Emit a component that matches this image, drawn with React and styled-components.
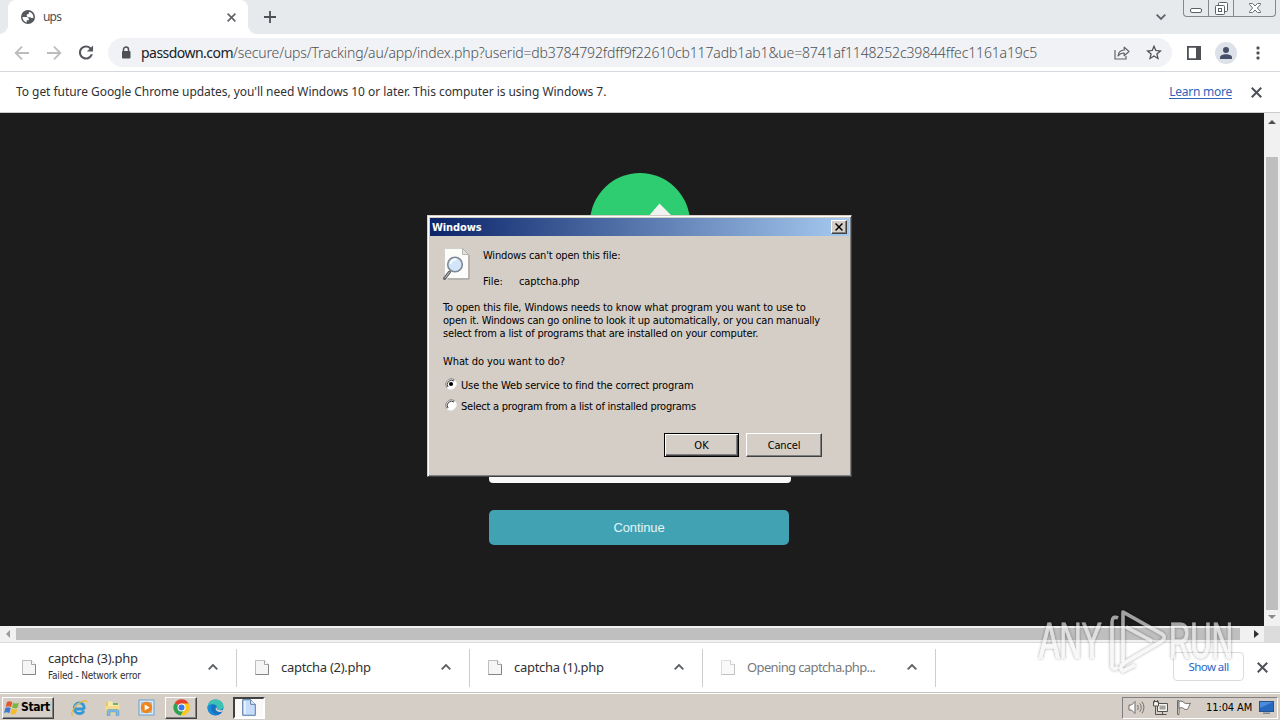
import React, { useState } from 'react';
import styled, { createGlobalStyle, css } from 'styled-components';

const GlobalStyle = createGlobalStyle`
  * {
    box-sizing: border-box;
  }

  body {
    margin: 0;
    overflow: hidden;
    font-family: 'DejaVu Sans Condensed', 'DejaVu Sans', sans-serif;
    font-size: 11px;
    color: #000;
  }

  button {
    font-family: inherit;
    padding: 0;
    margin: 0;
  }

  svg {
    display: block;
    flex: none;
  }
`;

const Screen = styled.div`
  position: relative;
  width: 1280px;
  height: 720px;
  overflow: hidden;
  display: flex;
  flex-direction: column;
  background: #fff;
`;

const Line = styled.span`
  display: block;
  flex: none;
  white-space: pre;
  font-size: ${(p) => p.$size || 11}px;
  line-height: ${(p) => p.$lh || 13}px;
  letter-spacing: ${(p) => p.$ls || 0}px;
  color: ${(p) => p.$color || '#000'};
`;

const UiLine = styled(Line)`
  font-family: 'Noto Sans', sans-serif;
  font-weight: ${(p) => p.$weight || 400};
`;

/* ---------- tab strip ---------- */

const TabStrip = styled.div`
  flex: none;
  display: flex;
  height: 34px;
  background: #e6eaed;
  padding-left: 8px;
`;

const Tab = styled.div`
  position: relative;
  display: flex;
  align-items: center;
  width: 240px;
  height: 34px;
  padding: 0 12px 0 13px;
  background: #fff;
  border-radius: 8px 8px 0 0;

  &::before,
  &::after {
    content: '';
    position: absolute;
    bottom: 0;
    width: 8px;
    height: 8px;
  }

  &::before {
    left: -8px;
    background: radial-gradient(circle at 0 0, transparent 7.5px, #fff 8px);
  }

  &::after {
    right: -8px;
    background: radial-gradient(circle at 100% 0, transparent 7.5px, #fff 8px);
  }
`;

const TabTitle = styled(UiLine)`
  flex: 1;
  margin-left: 8px;
`;

const NewTab = styled.div`
  margin: 10px 0 0 15px;
`;

const TabSearch = styled.div`
  margin: 12px 16px 0 auto;
`;

const WindowButtons = styled.div`
  display: flex;
  width: 93px;
  height: 17px;
  margin-right: 4px;
  border: 1px solid #83888c;
  border-top: 0;
  border-radius: 0 0 4px 4px;
`;

const WindowButton = styled.div`
  width: ${(p) => p.$w}px;
  display: flex;
  justify-content: center;
  padding-top: ${(p) => p.$top || 0}px;

  & + & {
    border-left: 1px solid #83888c;
  }
`;

/* ---------- toolbar ---------- */

const Toolbar = styled.div`
  flex: none;
  display: flex;
  align-items: center;
  height: 38px;
  border-bottom: 1px solid #d5d8dc;
  padding: 0 20px 0 14px;
`;

const NavIcons = styled.div`
  display: flex;
  gap: 16px;
  margin-right: 14px;
`;

const Omnibox = styled.div`
  display: flex;
  align-items: center;
  width: 1064px;
  height: 29px;
  border-radius: 15px;
  background: #f1f2f5;
  padding: 0 10px 0 12px;
`;

const Url = styled.div`
  display: flex;
  flex: 1;
  margin-left: 9px;
`;

const OmniIcons = styled.div`
  display: flex;
  gap: 16px;
`;

const ToolbarIcons = styled.div`
  display: flex;
  align-items: center;
  gap: 14px;
  margin-left: auto;
`;

const Menu = styled.div`
  margin-left: 5px;
`;

/* ---------- info bar ---------- */

const InfoBar = styled.div`
  flex: none;
  display: flex;
  align-items: center;
  height: 41px;
  border-bottom: 1px solid #c9cbcd;
  padding: 0 18px 0 16px;
`;

const LearnMore = styled(UiLine)`
  margin-left: auto;
  margin-right: 19px;
  border-bottom: 1px solid #2f64b8;
`;

/* ---------- page ---------- */

const Viewport = styled.div`
  flex: none;
  display: flex;
  height: 513px;
`;

const Page = styled.div`
  width: 1264px;
  background: #1c1c1c;
  display: flex;
  flex-direction: column;
  align-items: center;
  padding-top: 60px;
`;

const Badge = styled.div`
  width: 100px;
  height: 100px;
  margin-left: 16px;
`;

const PageForm = styled.div`
  width: 302px;
  margin: 173px 0 0 16px;
`;

const Field = styled.div`
  height: 37px;
  border-radius: 4px;
  background: #f8f8f8;
`;

const Continue = styled.button`
  display: block;
  width: 300px;
  height: 35px;
  margin-top: 27px;
  border: 0;
  border-radius: 5px;
  background: #41a2b3;
  color: #e4f5f7;
  font-family: 'Liberation Sans', Arial, sans-serif;
  font-size: 13px;
  letter-spacing: -0.1px;
`;

const VScroll = styled.div`
  width: 16px;
  background: #f1f1f1;
  display: flex;
  flex-direction: column;
  align-items: center;
  padding-top: 7px;
`;

const VThumb = styled.div`
  width: 12px;
  height: 453px;
  margin: 33px 0 5px;
  background: #bfbfbf;
`;

const HScroll = styled.div`
  flex: none;
  display: flex;
  align-items: center;
  height: 17px;
  background: #f1f1f1;
  border-bottom: 1px solid #dadada;
  padding-left: 6px;
`;

const HThumb = styled.div`
  width: 1224px;
  height: 12px;
  margin: 0 14px 0 5px;
  background: #bfbfbf;
`;

const Corner = styled.div`
  width: 16px;
  height: 16px;
  margin-left: auto;
  background: #dcdcdc;
`;

/* ---------- download shelf ---------- */

const Shelf = styled.div`
  flex: none;
  display: flex;
  align-items: center;
  height: 49px;
  background: #fff;
`;

const Download = styled.div`
  display: flex;
  align-items: center;
  width: ${(p) => p.$w}px;
  height: 38px;
  padding: 0 18px 0 ${(p) => p.$pad}px;
  border-right: 1px solid #cbcdd0;
`;

const DownloadText = styled.div`
  flex: 1;
  margin-left: 12px;
  padding-bottom: 1px;
`;

const ShowAll = styled.button`
  width: 71px;
  height: 29px;
  margin: 0 13px 2px auto;
  display: flex;
  align-items: center;
  justify-content: center;
  background: transparent;
  border: 1px solid #dadce0;
  border-radius: 4px;
`;

const ShelfClose = styled.div`
  margin: 0 12px 1px 0;
`;

/* ---------- taskbar ---------- */

const Taskbar = styled.div`
  flex: none;
  display: flex;
  align-items: center;
  height: 28px;
  border-top: 1px solid #c4c3bd;
  box-shadow: inset 0 1px 0 #fff;
  background: #d5cec6;
  padding: 2px 2px 0 2px;
`;

const raised = css`
  border: 1px solid;
  border-color: #fff #404040 #404040 #fff;
  box-shadow: inset -1px -1px 0 #808080;
`;

const StartButton = styled.button`
  ${raised}
  width: 52px;
  height: 22px;
  background: #d5cec6;
  display: flex;
  align-items: center;
  padding-left: 1px;
`;

const StartText = styled(Line)`
  font-weight: bold;
`;

const QuickLaunch = styled.div`
  display: flex;
  align-items: center;
  gap: 16px;
  margin: 0 10px 0 16px;
`;

const TaskButton = styled.div`
  width: 32px;
  height: 22px;
  margin-right: 2px;
  display: flex;
  align-items: center;
  justify-content: center;
  ${(p) =>
    p.$pressed
      ? css`
          background: #fbfaf8;
          border: 2px solid;
          border-color: #404040 #fff #fff #404040;
        `
      : p.$flat
      ? ''
      : raised}
`;

const Tray = styled.div`
  display: flex;
  align-items: center;
  width: 156px;
  height: 22px;
  margin-left: auto;
  border: 1px solid;
  border-color: #808080 #fff #fff #808080;
  padding-left: 5px;
`;

const TrayIcons = styled.div`
  display: flex;
  align-items: center;
  gap: 7px;
`;

const Clock = styled(Line)`
  margin: 0 7px 0 14px;
`;

/* ---------- dialog ---------- */

const Dialog = styled.div`
  position: absolute;
  left: 427px;
  top: 215px;
  width: 425px;
  height: 262px;
  background: #d5cec6;
  border: 1px solid;
  border-color: #d5cec6 #404040 #404040 #d5cec6;
  box-shadow: inset 1px 1px 0 #fff, inset -1px -1px 0 #808080;
  padding: 2px;
`;

const TitleBar = styled.div`
  display: flex;
  align-items: center;
  justify-content: space-between;
  height: 18px;
  background: linear-gradient(90deg, #0b246a, #a5caf0);
  padding: 0 2px;
`;

const TitleText = styled(Line)`
  font-weight: bold;
`;

const CloseButton = styled.button`
  ${raised}
  width: 16px;
  height: 14px;
  background: #d5cec6;
  display: flex;
  align-items: center;
  justify-content: center;
`;

const DialogBody = styled.div`
  padding: 11px 27px 0 13px;
`;

const FileInfo = styled.div`
  display: flex;
  gap: 12px;
  height: 54px;
`;

const FileText = styled.div`
  padding-top: 2px;
`;

const FileRow = styled.div`
  display: flex;
  margin-top: 13px;
`;

const FileLabel = styled.div`
  width: 36px;
`;

const Question = styled.div`
  margin-top: 15px;
`;

const Radio = styled.div`
  display: flex;
  align-items: flex-start;
  gap: 4px;
  height: 14px;
  margin: ${(p) => p.$mt}px 0 0 1px;

  & > span {
    padding-top: 1px;
  }
`;

const Actions = styled.div`
  display: flex;
  justify-content: flex-end;
  gap: 7px;
  margin-top: 20px;
`;

const ActionButton = styled.button`
  ${raised}
  width: ${(p) => (p.$primary ? 75 : 76)}px;
  height: 24px;
  background: #d5cec6;
  display: flex;
  align-items: center;
  justify-content: center;

  ${(p) =>
    p.$primary &&
    css`
      border-color: #000;
      box-shadow: inset 1px 1px 0 #fff, inset -1px -1px 0 #404040, inset -2px -2px 0 #808080;
    `}
`;

const Watermark = styled.div`
  position: absolute;
  left: 1036px;
  top: 604px;
  pointer-events: none;
`;

/* ---------- icons ---------- */

const Cross = ({ size = 9, w = 1.8, color = '#5f6368' }) => (
  <svg width={size} height={size} viewBox="0 0 10 10" stroke={color} strokeWidth={w}>
    <path d="M.7.7l8.6 8.6M9.3.7L.7 9.3" />
  </svg>
);

const Globe = () => (
  <svg width="14" height="14" viewBox="0 0 14 14">
    <circle cx="7" cy="7" r="7" fill="#55595e" />
    <path d="M1.500 7h3.700c2.200.1 3 1.200 2.600 3.300H5.700v2.200C3.300 12 1.500 9.700 1.500 7z" fill="#fff" />
    <path d="M12.500 7.500c-.9.900-2.300.8-3-.300H7C5.800 6.500 5.400 5.600 5.800 4.700c.4-.7 1-.9 1.900-.8-.1-1 .2-1.700 1-2 2.200.700 3.800 2.800 3.800 5.600z" fill="#fff" />
  </svg>
);

const Arrow = ({ flip }) => (
  <svg width="16" height="16" viewBox="0 0 16 16" fill="none" stroke="#babcbe" strokeWidth="1.8">
    <path d={flip ? 'M1 8h13M8 1.700L14.300 8 8 14.300' : 'M15 8H2M8 1.700L1.700 8 8 14.300'} />
  </svg>
);

const Reload = () => (
  <svg width="16" height="15" viewBox="3.500 3.500 17 17" fill="#55595e">
    <path d="M17.650 6.350C16.200 4.900 14.210 4 12 4c-4.420 0-7.990 3.580-7.990 8s3.570 8 7.990 8c3.730 0 6.840-2.550 7.730-6h-2.500c-.820 2.100-2.800 3.600-5.230 3.600-3.100 0-5.600-2.500-5.600-5.600s2.500-5.600 5.600-5.600c1.500 0 2.900.600 3.900 1.600L13 11h7V4l-2.350 2.350z" />
  </svg>
);

const Lock = () => (
  <svg width="12" height="14" viewBox="0 0 12 14">
    <path d="M3.500 6V3.600a2.500 2.500 0 015 0V6" fill="none" stroke="#4d5156" strokeWidth="1.500" />
    <rect x="2" y="5" width="8.500" height="7.500" rx="1" fill="#4d5156" />
  </svg>
);

const Share = () => (
  <svg width="16" height="16" viewBox="0 0 16 16" fill="none" stroke="#5f6368" strokeWidth="1.200">
    <path d="M1 5v9h11v-3" />
    <path d="M4 11c.400-3.800 2.500-5.800 6.200-6V2.200L15 6.500l-4.800 4.200V8C7.400 8 5.400 9 4 11z" strokeLinejoin="round" />
  </svg>
);

const Star = () => (
  <svg width="16" height="16" viewBox="2 2.500 20 20" fill="#4d5156">
    <path d="M22 9.240l-7.190-.620L12 2 9.190 8.630 2 9.240l5.460 4.730L5.820 21 12 17.270 18.180 21l-1.630-7.030L22 9.240zM12 15.400l-3.760 2.270 1-4.280-3.320-2.880 4.380-.380L12 6.100l1.710 4.040 4.380.380-3.320 2.880 1 4.280L12 15.400z" />
  </svg>
);

const Panel = () => (
  <svg width="14" height="14" viewBox="0 0 14 14">
    <path d="M0 0h14v14H0zM1.800 1.800v10.400H9V1.800z" fillRule="evenodd" fill="#4d5156" />
  </svg>
);

const Avatar = () => (
  <svg width="22" height="22" viewBox="0 0 22 22">
    <circle cx="11" cy="11" r="11" fill="#dde1e8" />
    <circle cx="11" cy="8" r="3" fill="#475069" />
    <path d="M5 17v-1.500c0-2.300 3-3.300 6-3.300s6 1 6 3.300V17z" fill="#475069" />
  </svg>
);

const Dots = () => (
  <svg width="4" height="14" viewBox="0 0 4 14" fill="#4d5156">
    <rect x=".5" y="0.500" width="3" height="3" rx="1" />
    <rect x=".5" y="5.500" width="3" height="3" rx="1" />
    <rect x=".5" y="10.500" width="3" height="3" rx="1" />
  </svg>
);

const Chevron = () => (
  <svg width="10" height="8" viewBox="0 0 10 8" fill="none" stroke="#5f6368" strokeWidth="1.900">
    <path d="M.7 5.300L5 1l4.300 4.300" />
  </svg>
);

const Triangle = ({ d, color = '#4f4f4f', w = 8, h = 4 }) => (
  <svg width={w} height={h} viewBox={`0 0 ${w} ${h}`} fill={color}>
    <path d={d} />
  </svg>
);

const FileIcon = ({ faded }) => (
  <svg width="14" height="17" viewBox="0 0 14 17" opacity={faded ? 0.5 : 1}>
    <path d="M.5 1.500h9l4 4v10H.5z" fill="#f5f5f5" stroke="#bdbdbd" />
    <path d="M9.500 1.500v4h4" fill="#fff" stroke="#a5a5a5" />
    <path d="M.5 15.500h13V5.500" fill="none" stroke="#858585" />
  </svg>
);

const SearchDoc = () => (
  <svg width="28" height="34" viewBox="0 0 28 34">
    <path d="M1.500 1.500h18l6 6v24h-24z" fill="#fcfcfa" stroke="#d2d0ca" />
    <path d="M19.500 1.500l6 6h-6z" fill="#e3e1dc" stroke="#a9a7a2" strokeWidth=".8" />
    <path d="M26 8v24H5" fill="none" stroke="#8d8b87" strokeWidth=".8" />
    <path d="M6.500 25l-5 6.500" stroke="#66696d" strokeWidth="3" strokeLinecap="round" />
    <path d="M6.500 25l-4.500 6" stroke="#b5bac0" strokeWidth="1" />
    <circle cx="12" cy="17.500" r="7.300" fill="#d3e5fa" stroke="#7e8995" strokeWidth="1.600" />
    <path d="M7.500 17c.500-3 3-5 6-4.500" stroke="#fff" strokeWidth="1.800" fill="none" />
  </svg>
);

const RadioMark = ({ checked }) => (
  <svg width="13" height="13" viewBox="0 0 13 13">
    <circle cx="7" cy="6" r="5" fill="#fff" />
    <path d="M3.200 9.800A5.400 5.400 0 0110.800 2.200" fill="none" stroke="#808080" />
    <path d="M4 9A4.300 4.300 0 0110 3" fill="none" stroke="#404040" />
    <path d="M10.800 2.200A5.400 5.400 0 013.200 9.800" fill="none" stroke="#fff" />
    {checked && <circle cx="7" cy="6" r="2.100" fill="#000" />}
  </svg>
);

const WinFlag = () => (
  <svg width="17" height="16" viewBox="0 0 16 15">
    <path d="M2.800 1.800c1.800-1 3.500-.8 5 .2L6.600 6.700c-1.600-1-3.200-1.100-5-.2z" fill="#e2572b" />
    <path d="M8.700 2.500c1.600.9 3.300.9 5.300 0l-1.300 4.700c-1.900.9-3.600.8-5.100-.1z" fill="#7db53a" />
    <path d="M1.300 7.500c1.800-.9 3.400-.8 5 .2L5 12.400c-1.500-1-3.200-1.100-5-.2z" fill="#3f78cf" />
    <path d="M7.300 8.200c1.600.9 3.300.9 5.200 0l-1.300 4.700c-2 .9-3.700.8-5.200-.1z" fill="#f5bd2b" />
  </svg>
);

const IeIcon = () => (
  <svg width="18" height="18" viewBox="0 0 18 18" fill="none">
    <path d="M14.500 10H4.800M14.200 9.800c.2-3.700-1.800-6-4.900-6-3 0-5 2.300-5 5.400s2.100 5.300 5.100 5.300c2.200 0 3.700-.9 4.400-2.500" stroke="#3398d6" strokeWidth="2.800" />
    <path d="M4.500 8c.7-2.400 2.500-3.700 5-3.700" stroke="#8dd0f2" />
    <path d="M3 16.300C-.5 16 3.500 8 9.500 4c4-2.700 7.500-3.300 7-.5" stroke="#e6b93f" strokeWidth="1.300" />
  </svg>
);

const FolderIcon = () => (
  <svg width="18" height="18" viewBox="0 0 18 18">
    <path d="M2 3h5l1 2h7v9H2z" fill="#e9c765" />
    <path d="M4 2.500h4l1 2h6v4H4z" fill="#f7e9a8" />
    <path d="M9 4h5v2H9z" fill="#69b37a" />
    <path d="M1.500 7h14v7.500h-14z" fill="#f3dd8c" />
    <path d="M3 16.500v-4.200c0-1.300.8-1.800 2-1.800h8c1.200 0 2 .5 2 1.800v4.200h-3V13H6v3.500z" fill="#7fb9e2" stroke="#5a95c4" strokeWidth=".5" />
  </svg>
);

const MediaIcon = () => (
  <svg width="17" height="17" viewBox="0 0 17 17">
    <rect x="1" y="1" width="15" height="15" fill="#d8e8f6" stroke="#6aa0d0" />
    <rect x="3" y="3" width="11" height="11" fill="#9dc3e6" />
    <circle cx="8.500" cy="8.500" r="5.700" fill="#f0851d" />
    <path d="M6.700 5.500v6l5-3z" fill="#fff" />
  </svg>
);

const ChromeIcon = () => (
  <svg width="17" height="17" viewBox="0 0 17 17">
    <path d="M8.500 8.500L1.600 4.200a8 8 0 0114 .2z" fill="#e2412f" />
    <path d="M8.500 8.500L1.600 4.200a8 8 0 006.100 12.200l3.700-6z" fill="#2fa04f" />
    <path d="M8.500 8.500l3 1.600-3.800 6.300a8 8 0 007.900-12H8.500z" fill="#fbc616" />
    <circle cx="8.500" cy="8.400" r="4" fill="#fff" />
    <circle cx="8.500" cy="8.400" r="3" fill="#3b78e7" />
  </svg>
);

const EdgeIcon = () => (
  <svg width="17" height="17" viewBox="0 0 17 17">
    <circle cx="8.500" cy="8.500" r="8" fill="#1673c4" />
    <path d="M.5 8C1 3 4.500.5 8.500.5c4.500 0 8 3 8 6.500 0 2.500-2 4-4.300 4-1.500 0-2.700-.6-2.200-1.600C10.600 7.500 9 5.500 6.500 5.300 3.500 5.200 1.200 6.500.5 8z" fill="#3cc3b5" />
    <path d="M.5 8c.7-2 3-3.200 5.500-2.700C4 6.500 3.500 9 4.500 11.500s3.500 4.300 6.500 4.300C5.500 17.500 0 13.500.5 8z" fill="#1b8bd6" />
    <path d="M9.300 8c-1.500 2 0 4.700 3 5 1.400.1 2.800-.2 4.700-1.200V10.500c-2 1-6 .9-7-.5z" fill="#d5cec6" />
  </svg>
);

const DocIcon = () => (
  <svg width="14" height="17" viewBox="0 0 14 17">
    <path d="M.7.7h8l4.600 4.600v11H.7z" fill="#c6dcf7" stroke="#5678a8" />
    <path d="M8.700.7v4.600h4.600" fill="#eef5fd" stroke="#5678a8" />
    <path d="M2 2h2v13H2z" fill="#e4effc" />
  </svg>
);

const Speaker = () => (
  <svg width="17" height="15" viewBox="0 0 17 15" fill="#fff" stroke="#6d6b68">
    <path d="M1 5h2.500L7 1.500v12L3.500 10H1z" />
    <path d="M9.500 5c1 1.500 1 3.500 0 5M11.700 3.300c2 2.500 2 6 0 8.500M14 1.700c2.500 3.500 2.500 8 0 11.500" fill="none" />
  </svg>
);

const Network = () => (
  <svg width="17" height="16" viewBox="0 0 17 16" stroke="#55534f" fill="#f3f1ee">
    <path d="M5.500 3.500h10v8h-10z" />
    <path d="M7.500 5.500h6v4h-6z" fill="#a6a39e" stroke="none" />
    <path d="M7.500 14.500h7M10.500 12v2" />
    <path d="M1.500 1.500h5V6h-5z" />
    <path d="M3.500 6v8.500H8" fill="none" />
    <path d="M2.500 0v2.500M5.500 0v2.500" />
  </svg>
);

const Flag = () => (
  <svg width="16" height="15" viewBox="0 0 16 15" fill="#fff" stroke="#6d6b68">
    <path d="M1.500.5h1.500v14H1.500z" />
    <path d="M3 1.500c2.500-1 4 0 5 1.200 1.500 1.200 4 1.100 6.500.5-1 1-1.500 4-3 6-2 .6-3 .2-4-.8-1.500-1-3-1-4.500 0z" />
  </svg>
);

const Monitor = () => (
  <svg width="15" height="13" viewBox="0 0 15 13">
    <rect x="0" y="0" width="15" height="11" fill="#27518f" />
    <rect x="1" y="1" width="13" height="9" fill="#2568bd" />
    <path d="M1 1h13L1 7z" fill="#4a8cda" />
    <rect x="4" y="11.500" width="7" height="1.500" fill="#7e8894" />
  </svg>
);

const AnyRunMark = () => (
  <svg width="204" height="76" viewBox="0 0 204 76">
    <defs>
      <filter id="soft" x="-10%" y="-10%" width="120%" height="120%">
        <feDropShadow dx="0" dy="0" stdDeviation="1.8" floodColor="#000" floodOpacity=".65" />
      </filter>
    </defs>
    <g filter="url(#soft)" opacity=".62" fill="#f4f4f4" stroke="#f4f4f4">
      <g fontFamily="'Liberation Sans', sans-serif" fontSize="50" strokeWidth=".9">
        <text x="3" y="54" textLength="63" lengthAdjust="spacingAndGlyphs">ANY</text>
        <text x="133" y="54" textLength="64" lengthAdjust="spacingAndGlyphs">RUN</text>
      </g>
      <path
        d="M82 14c-4-2-6 0-6 4v43c0 4 3 5 6 2M87 58V8l39 22c3 2 3 5 0 7L88 59c-4 3-4 6-1 8l12-6M90 23l26 14"
        fill="none"
        strokeWidth="3.500"
        strokeLinejoin="round"
      />
    </g>
  </svg>
);

/* ---------- data ---------- */

const downloads = [
  { name: 'captcha (3).php', note: 'Failed - Network error', w: 237, pad: 22, ls: -0.28 },
  { name: 'captcha (2).php', w: 233, pad: 18, ls: -0.28 },
  { name: 'captcha (1).php', w: 233, pad: 18, ls: -0.28 },
  { name: 'Opening captcha.php...', w: 233, pad: 18, ls: -0.63, faded: true },
];

const message = [
  { text: 'To open this file, Windows needs to know what program you want to use to', ls: -0.125 },
  { text: 'open it. Windows can go online to look it up automatically, or you can manually', ls: -0.228 },
  { text: 'select from a list of programs that are installed on your computer.', ls: -0.175 },
];

const choices = [
  { text: 'Use the Web service to find the correct program', ls: -0.13, mt: 10 },
  { text: 'Select a program from a list of installed programs', ls: -0.23, mt: 7 },
];

const App = () => {
  const [choice, setChoice] = useState(0);

  return (
    <Screen>
      <GlobalStyle />
      <TabStrip>
        <Tab>
          <Globe />
          <TabTitle $size={12} $lh={16} $ls={-0.8} $color="#4b4f54">ups</TabTitle>
          <Cross size={9} />
        </Tab>
        <NewTab>
          <svg width="14" height="14" viewBox="0 0 14 14" stroke="#4d5156" strokeWidth="1.8">
            <path d="M7 1v12M1 7h12" />
          </svg>
        </NewTab>
        <TabSearch>
          <svg width="12" height="10" viewBox="-1 -2 12 10" fill="none" stroke="#5f6368" strokeWidth="1.8">
            <path d="M.7.7L5 5 9.3.7" />
          </svg>
        </TabSearch>
        <WindowButtons>
          <WindowButton $w={24} $top={8}>
            <svg width="12" height="5" viewBox="0 0 12 5">
              <rect x=".5" y=".5" width="11" height="4" rx="1.5" fill="#fff" stroke="#5a6068" />
            </svg>
          </WindowButton>
          <WindowButton $w={25} $top={2}>
            <svg width="13" height="13" viewBox="0 0 13 13" fill="#fff" stroke="#5a6068">
              <rect x="3.5" y=".5" width="9" height="9" rx="1" />
              <rect x=".5" y="3.5" width="9" height="9" rx="1" />
              <rect x="3.5" y="6.5" width="3" height="3" />
            </svg>
          </WindowButton>
          <WindowButton $w={42} $top={3}>
            <svg width="12" height="10" viewBox="0 0 12 10">
              <path d="M.5.5h3L6 3 8.500.5h3v1L8.300 5l3.200 3.500v1h-3L6 7 3.500 9.500h-3v-1L3.700 5 .5 1.500z" fill="#fff" stroke="#5a6068" strokeWidth=".9" />
            </svg>
          </WindowButton>
        </WindowButtons>
      </TabStrip>

      <Toolbar>
        <NavIcons>
          <Arrow />
          <Arrow flip />
          <Reload />
        </NavIcons>
        <Omnibox>
          <Lock />
          <Url>
            <UiLine $size={14} $lh={18} $ls={-0.53} $color="#202124">passdown.com</UiLine>
            <UiLine $size={14} $lh={18} $ls={-0.14} $weight={300} $color="#4d5156">
              /secure/ups/Tracking/au/app/index.php?userid=db3784792fdff9f22610cb117adb1ab1&amp;ue=8741af1148252c39844ffec1161a19c5
            </UiLine>
          </Url>
          <OmniIcons>
            <Share />
            <Star />
          </OmniIcons>
        </Omnibox>
        <ToolbarIcons>
          <Panel />
          <Avatar />
          <Menu>
            <Dots />
          </Menu>
        </ToolbarIcons>
      </Toolbar>

      <InfoBar>
        <UiLine $size={12} $lh={16} $ls={-0.05} $color="#303134">
          To get future Google Chrome updates, you'll need Windows 10 or later. This computer is using Windows 7.
        </UiLine>
        <LearnMore $size={12} $lh={13} $ls={-0.25} $color="#2f64b8">Learn more</LearnMore>
        <Cross size={11} color="#4d5156" />
      </InfoBar>

      <Viewport>
        <Page>
          <Badge>
            <svg width="100" height="100" viewBox="0 0 100 100">
              <circle cx="50" cy="50" r="50" fill="#2fcd71" />
              <path d="M69.500 30.500l12 12-36 36-20-20 10-10 10 10z" fill="#f1f3f1" />
            </svg>
          </Badge>
          <PageForm>
            <Field />
            <Continue>Continue</Continue>
          </PageForm>
        </Page>
        <VScroll>
          <Triangle d="M0 4l4-4 4 4z" />
          <VThumb />
          <Triangle d="M0 0l4 4 4-4z" color="#8b8b8b" />
        </VScroll>
      </Viewport>
      <HScroll>
        <Triangle d="M4 0v8L0 4z" w={5} h={8} color="#9b9b9b" />
        <HThumb />
        <Triangle d="M0 0v8l5-4z" w={5} h={8} color="#303030" />
        <Corner />
      </HScroll>

      <Shelf>
        {downloads.map((d) => (
          <Download key={d.name} $w={d.w} $pad={d.pad}>
            <FileIcon faded={d.faded} />
            <DownloadText>
              <UiLine $size={13} $lh={17} $ls={d.ls} $color={d.faded ? '#77797c' : '#303134'}>{d.name}</UiLine>
              {d.note && <Line $size={10} $lh={17} $ls={-0.2} $color="#303134">{d.note}</Line>}
            </DownloadText>
            <Chevron />
          </Download>
        ))}
        <ShowAll>
          <UiLine $size={11.5} $lh={16} $ls={-0.55} $color="#2a66c8">Show all</UiLine>
        </ShowAll>
        <ShelfClose>
          <Cross size={11} color="#4d5156" />
        </ShelfClose>
      </Shelf>

      <Taskbar>
        <StartButton>
          <WinFlag />
          <StartText $size={12} $ls={-0.4}>Start</StartText>
        </StartButton>
        <QuickLaunch>
          <IeIcon />
          <FolderIcon />
          <MediaIcon />
        </QuickLaunch>
        <TaskButton>
          <ChromeIcon />
        </TaskButton>
        <TaskButton $flat>
          <EdgeIcon />
        </TaskButton>
        <TaskButton $pressed>
          <DocIcon />
        </TaskButton>
        <Tray>
          <TrayIcons>
            <Speaker />
            <Network />
            <Flag />
          </TrayIcons>
          <Clock $ls={-0.1}>11:04 AM</Clock>
          <Monitor />
        </Tray>
      </Taskbar>

      <Dialog>
        <TitleBar>
          <TitleText $color="#fff" $ls={-0.1}>Windows</TitleText>
          <CloseButton>
            <Cross size={8} w={1.8} color="#000" />
          </CloseButton>
        </TitleBar>
        <DialogBody>
          <FileInfo>
            <SearchDoc />
            <FileText>
              <Line $ls={-0.17}>Windows can't open this file:</Line>
              <FileRow>
                <FileLabel>
                  <Line>File:</Line>
                </FileLabel>
                <Line $ls={-0.08}>captcha.php</Line>
              </FileRow>
            </FileText>
          </FileInfo>
          {message.map((m) => (
            <Line key={m.text} $ls={m.ls}>{m.text}</Line>
          ))}
          <Question>
            <Line $ls={-0.09}>What do you want to do?</Line>
          </Question>
          {choices.map((c, i) => (
            <Radio key={c.text} $mt={c.mt} onClick={() => setChoice(i)}>
              <RadioMark checked={choice === i} />
              <Line $ls={c.ls}>{c.text}</Line>
            </Radio>
          ))}
          <Actions>
            <ActionButton $primary>
              <Line>OK</Line>
            </ActionButton>
            <ActionButton>
              <Line $ls={-0.15}>Cancel</Line>
            </ActionButton>
          </Actions>
        </DialogBody>
      </Dialog>

      <Watermark>
        <AnyRunMark />
      </Watermark>
    </Screen>
  );
};

export default App;
